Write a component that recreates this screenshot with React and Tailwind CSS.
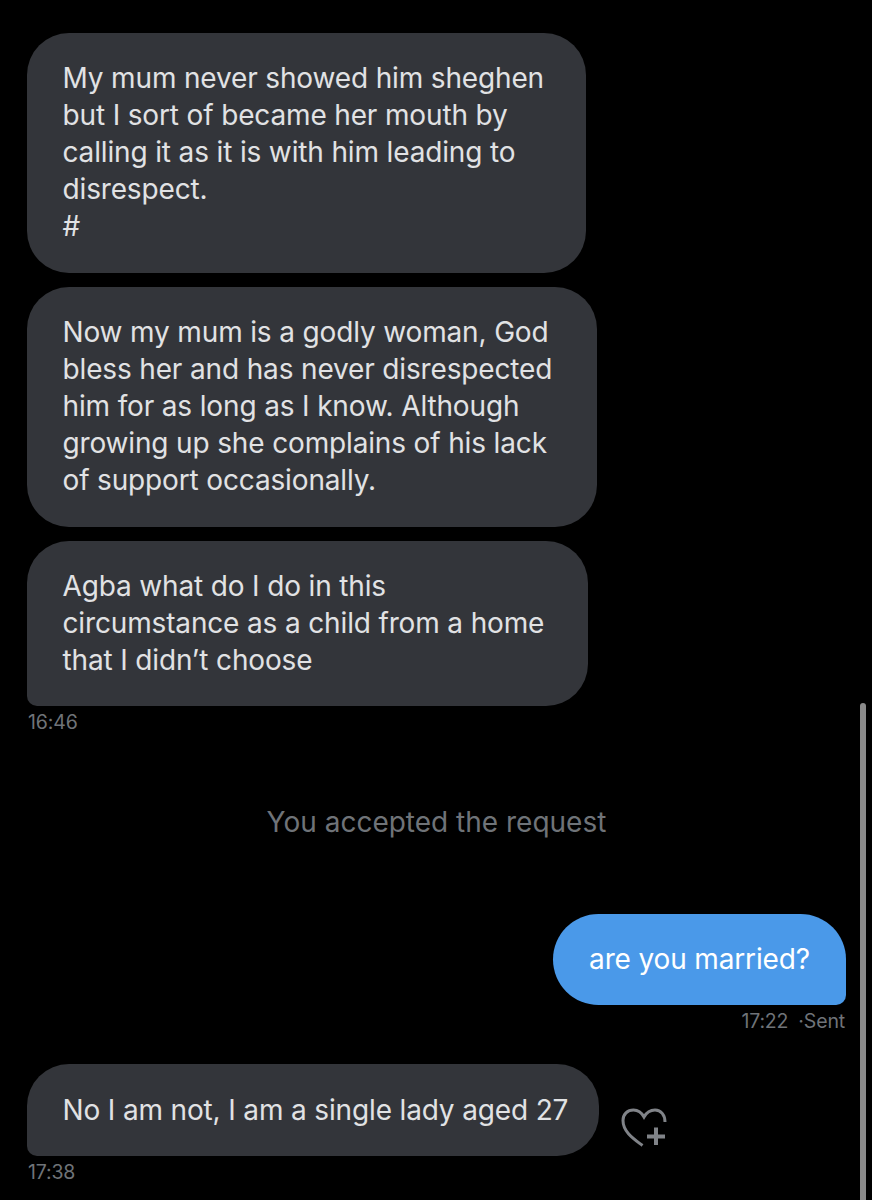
function Bubble({ width, tail, children }) {
  return (
    <div className={`${width} rounded-[42px] ${tail ? 'rounded-bl-[10px]' : ''} bg-[#33353a] pl-[35.5px] pr-4 py-[27.4px] text-[28px] leading-[37px] text-[#e1e2e4]`}>
      {children}
    </div>
  );
}

function Stamp({ children, className = '' }) {
  return <div className={`text-[19.5px] leading-[24px] text-[#6f7378] ${className}`}>{children}</div>;
}

export default function App() {
  return (
    <div className="relative h-[1200px] w-[872px] overflow-hidden bg-black font-['Inter','Liberation_Sans',sans-serif] tracking-[-0.15px]">
      <div className="flex flex-col pl-[27px] pr-[26px] pt-[33px]">
        <div className="flex flex-col gap-[14px]">
          <Bubble width="w-[559px]">
            My mum never showed him sheghen<br />
            but I sort of became her mouth by<br />
            calling it as it is with him leading to<br />
            disrespect.<br />
            #
          </Bubble>
          <Bubble width="w-[570px]">
            Now my mum is a godly woman, God<br />
            bless her and has never disrespected<br />
            him for as long as I know. Although<br />
            growing up she complains of his lack<br />
            of support occasionally.
          </Bubble>
          <Bubble width="w-[561px]" tail>
            Agba what do I do in this<br />
            circumstance as a child from a home<br />
            that I didn’t choose
          </Bubble>
        </div>
        <Stamp className="mt-1 pl-px">16:46</Stamp>

        <div className="mt-[70px] text-center text-[28px] leading-[37px] tracking-[0px] text-[#6f7378]">You accepted the request</div>

        <div className="mt-[73px] flex flex-col items-end">
          <div className="w-[293px] rounded-[46px] rounded-br-[10px] bg-[#4a99e9] py-[27px] text-center text-[28px] leading-[37px] text-white">
            are you married?
          </div>
          <Stamp className="mt-1 flex gap-[10px] pr-px">
            <span>17:22</span>
            <span>·Sent</span>
          </Stamp>
        </div>

        <div className="mt-[31px] flex items-center gap-[22px]">
          <Bubble width="w-[572px]" tail>No I am not, I am a single lady aged 27</Bubble>
          {/* like reaction button */}
          <svg width="46" height="42" viewBox="0 0 46 42" fill="none" stroke="#808388" strokeWidth="3" className="mt-[38px]">
            <path d="M21.5 37.5 C13 31 2 24 2 12.5 C2 6 6.5 2 12.5 2 C17 2 20.5 4.5 23 9 C25.5 4.5 29 2 34 2 C40 2 44 7 44 14" />
            <path d="M35 19.5 V37 M26 28.5 H44" strokeWidth="4" />
          </svg>
        </div>
        <Stamp className="mt-1 pl-px">17:38</Stamp>
      </div>

      {/* scroll indicator */}
      <div className="absolute right-[6px] top-[703px] h-[497px] w-[6px] rounded-t-full bg-[#8a8a8a]" />
    </div>
  );
}
